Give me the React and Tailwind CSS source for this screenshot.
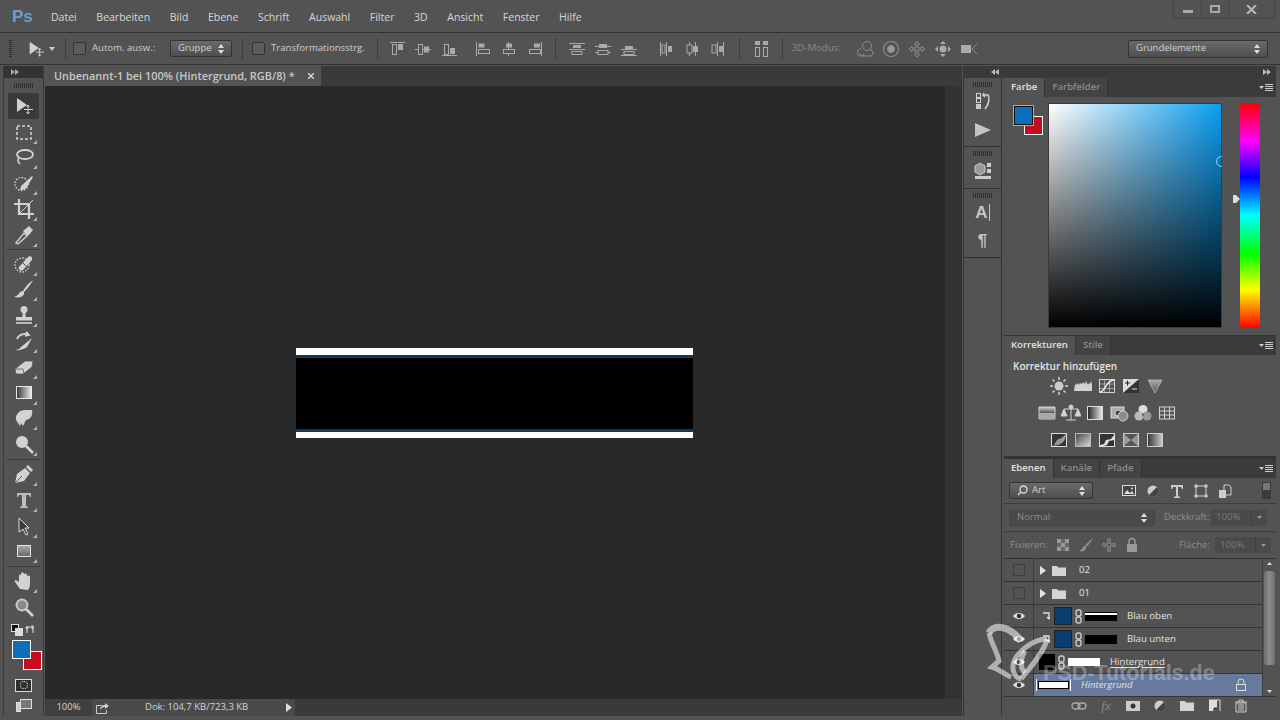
import React from "react";

const FONT = "font-['Open_Sans',sans-serif]";

function Ic({ size = 18, vb = 20, className = "text-[#d2d2d2]", children }) {
  return (
    <svg width={size} height={size} viewBox={`0 0 ${vb} ${vb}`} className={`shrink-0 ${className}`} fill="none" stroke="currentColor" strokeWidth="1">
      {children}
    </svg>
  );
}

// pale gradient used by lots of the adjustment icons
const G = ({ id, from = "#ddd", to = "#555", x2 = 1, y2 = 0 }) => (
  <defs>
    <linearGradient id={id} x1="0" y1="0" x2={x2} y2={y2}>
      <stop offset="0" stopColor={from} />
      <stop offset="1" stopColor={to} />
    </linearGradient>
  </defs>
);

const F = { fill: "currentColor", stroke: "none" };

/* ---------- left tool bar ---------- */
const tools = [
  [<><path d="M3 2l10 7-10 7z" {...F} /><path d="M14 9v9M10 13.500h9" /><path d="M12.500 11l1.500-2 1.500 2M12.500 16l1.500 2 1.500-2" /></>, true, false],
  [<rect x="3" y="4" width="14" height="13" strokeDasharray="3 2" strokeWidth="1.600" />, false, true],
  [<><ellipse cx="11" cy="7.500" rx="8" ry="4.500" strokeWidth="1.800" /><path d="M5 11c-2 2-1 4 1 6" strokeWidth="1.600" /></>, false, true],
  [<><circle cx="7.500" cy="11" r="6.500" strokeDasharray="1.500 1.500" strokeWidth="1.500" /><path d="M7 13L18 3l1 1-6 10c-2 3-5 3-7 3z" {...F} /></>, false, true],
  [<><path d="M5 0v15h15M0 5h15v15" strokeWidth="2.200" /><path d="M6 14L19 1" /></>, false, true],
  [<><path d="M2 18l8-10 3 3-9 8z" strokeWidth="1.300" /><path d="M9 6l6-5 4 4-5 6z" {...F} /></>, false, true],
  "sep",
  [<><circle cx="8" cy="11" r="7" strokeDasharray="1.500 1.500" strokeWidth="1.400" /><path d="M5 13L14 3c3-2 5 1 4 3l-9 10c-3 2-5-1-4-3z" {...F} /><path d="M9 9l3 3" stroke="#555" /></>, false, true],
  [<path d="M19 1c-3 2-8 7-10 11l-3 1c-1 2-3 4-6 5 5 1 9 0 10-3l0-2c3-3 7-8 9-12z" {...F} />, false, true],
  [<><circle cx="10" cy="4.500" r="3.500" {...F} /><path d="M8.500 7h3v5h-3z" {...F} /><path d="M2 12h16v3.500H2z" {...F} /><path d="M2 18h16" strokeWidth="1.600" /></>, false, true],
  [<><path d="M3 8c2-5 8-6 11-4M12 1l3 3-4 1" strokeWidth="1.800" /><path d="M1 19c2 0 5-1 6-3l11-9-5 9c-3 2-8 4-12 3z" {...F} /></>, false, true],
  [<path d="M1 12l10-8h8l-1 6-9 7H2zM2 12h7l1 5" fill="currentColor" stroke="#555" strokeWidth=".8" />, false, true],
  [<><G id="tg" from="#333" to="#eee" /><rect x="2.500" y="3.500" width="15" height="12" fill="url(#tg)" stroke="#e8e8e8" /></>, false, true],
  [<path d="M2 12C1 7 5 2 11 2h7c1 5-1 9-6 10l-3 6-2-3-1 3z" {...F} />, false, true],
  [<><circle cx="8" cy="8" r="6" {...F} /><path d="M12 12l7 7" strokeWidth="2.600" /></>, false, true],
  "sep2",
  [<><path d="M1 19l2-9 8-6 5 5-6 8z" {...F} /><path d="M1 19l7-7" stroke="#555" /><path d="M12 3l2-2 5 5-2 2z" {...F} /></>, false, true],
  [<path d="M3 3h14v4h-1l-1-2h-3v11l2 1v1H6v-1l2-1V5H5L4 7H3z" fill="#bdbdbd" stroke="none" />, false, true],
  [<path d="M5 2l10 10h-4l3 6-2 1-3-6-4 3z" fill="#3a3a3a" stroke="#ddd" />, false, true],
  [<><G id="ts" from="#aaa" to="#666" x2={0} y2={1} /><rect x="3.500" y="4.500" width="13" height="11" fill="url(#ts)" stroke="#e0e0e0" /></>, false, true],
  "sep2",
  [<path d="M6 18L1 11c-1-2 1-3 2-1l2 1V5c0-2 2-2 2 0v3-5c0-2 3-2 3 0v5-4c0-2 3-2 3 0v5-3c0-2 3-2 3 0v7c0 3-1 5-2 6z" {...F} />, false, true],
  [<><circle cx="8" cy="8" r="5.500" fill="#8a8a8a" stroke="#c8c8c8" strokeWidth="2" /><path d="M12 12l7 7" strokeWidth="2.600" /></>, false, false],
];

function Tool({ icon, active, corner }) {
  return (
    <div className={`relative mx-auto flex h-[26px] w-[31px] items-center justify-center rounded-[2px] ${active ? "bg-[#3a3a3a]" : ""}`}>
      <Ic size={20}>{icon}</Ic>
      {corner && <span className="absolute bottom-[1px] right-[2px] h-0 w-0 border-b-[4px] border-l-[4px] border-b-[#b4b4b4] border-l-transparent" />}
    </div>
  );
}

function Grip() {
  return <div className="mx-auto h-[5px] w-[20px] bg-[repeating-linear-gradient(to_right,#2e2e2e_0,#2e2e2e_1px,transparent_1px,transparent_2px)]" />;
}

function Toolbar() {
  return (
    <div className="flex w-[41px] shrink-0 flex-col border-x border-[#3a3a3a] bg-[#535353]">
      <div className="flex h-[12px] shrink-0 items-center bg-[#333] pl-[7px] text-[#aaa]">
        <Chev />
      </div>
      <div className="flex h-[15px] shrink-0 items-center justify-center"><Grip /></div>
      {tools.map((t, i) =>
        t === "sep" ? (
          <div key={i} className="mx-[3px] my-[1px] h-px shrink-0 bg-[#3c3c3c]" />
        ) : t === "sep2" ? (
          <div key={i} className="mx-[3px] mb-[1px] mt-[2px] h-px shrink-0 bg-[#3c3c3c]" />
        ) : (
          <Tool key={i} icon={t[0]} active={t[1]} corner={t[2]} />
        )
      )}
      <div className="flex h-[20px] shrink-0 items-center justify-between px-[7px]">
        <Ic size={12} vb={12}><rect x=".5" y=".5" width="7" height="7" fill="#111" stroke="#ddd" /><rect x="4.500" y="4.500" width="7" height="7" fill="#ddd" stroke="#ddd" /></Ic>
        <Ic size={12} vb={12}><path d="M3 9V3h6M1.500 4.500L3 2.500l1.500 2M7.500 1.500L9.500 3l-2 1.500M9 3v6" strokeWidth="1.200" /></Ic>
      </div>
      <div className="relative mx-[4px] h-[30px] shrink-0">
        <span className="absolute left-[15px] top-[11px] h-[19px] w-[19px] border border-white bg-[#c40e1e]" />
        <span className="absolute left-[4px] top-0 h-[19px] w-[19px] border border-white bg-[#0a70bd]" />
      </div>
      <div className="mt-[9px] flex shrink-0 justify-center">
        <div className="flex h-[13px] w-[17px] items-center justify-center border border-[#ddd] bg-[#2e2e2e]">
          <span className="h-[8px] w-[8px] rounded-full border border-dotted border-white" />
        </div>
      </div>
      <div className="mt-[6px] flex shrink-0 justify-center">
        <Ic size={18} vb={18}><rect x="5.500" y="1.500" width="11" height="9" fill="#777" stroke="#ddd" /><rect x="1.500" y="4.500" width="4" height="9" fill="#ccc" stroke="#ddd" /></Ic>
      </div>
    </div>
  );
}

function Chev({ left }) {
  return (
    <svg width="8" height="6" viewBox="0 0 8 6" className="fill-current">
      {left ? <path d="M4 0v6L0 3zM8 0v6L4 3z" /> : <path d="M0 0v6l4-3zM4 0v6l4-3z" />}
    </svg>
  );
}

/* ---------- options bar ---------- */
const SM = { fill: "#aaa", stroke: "none" };
const alignIcons = [
  <><path d="M1 2.500h15" /><rect x="3.500" y="4.500" width="4" height="10" /><rect x="9" y="4" width="5" height="6" {...SM} /></>,
  <><path d="M0 9.500h16" /><rect x="3.500" y="4.500" width="4" height="10" fill="#535353" /><rect x="9" y="6.500" width="5" height="6" {...SM} /></>,
  <><path d="M1 15.500h15" /><rect x="3.500" y="4.500" width="4" height="10" /><rect x="9" y="8" width="5" height="6" {...SM} /></>,
  <><path d="M2.500 2v14" /><rect x="4.500" y="3.500" width="6" height="4" {...SM} /><rect x="4.500" y="9.500" width="11" height="4" /></>,
  <><path d="M8.500 2v14" /><rect x="6" y="3.500" width="6" height="4" {...SM} /><rect x="3.500" y="9.500" width="11" height="4" fill="#535353" /></>,
  <><path d="M15.500 2v14" /><rect x="8" y="3.500" width="6" height="4" {...SM} /><rect x="3.500" y="9.500" width="11" height="4" /></>,
];
const distIcons = [
  <><path d="M1 3.500h16M1 9.500h16" /><rect x="5" y="5" width="8" height="3" {...SM} /><rect x="4" y="11.500" width="10" height="3" /></>,
  <><path d="M1 6.500h16M1 12.500h16" /><rect x="5" y="4" width="8" height="4" {...SM} /><rect x="4" y="10.500" width="10" height="4" fill="#535353" /></>,
  <><path d="M1 9.500h16M1 15.500h16" /><rect x="5" y="6" width="8" height="3" {...SM} /><rect x="4" y="11.500" width="10" height="3" /></>,
];
const distIcons2 = [
  <><path d="M3.500 2v14M9.500 2v14" /><rect x="5" y="5" width="3" height="8" /><rect x="11" y="6" width="4" height="6" {...SM} /></>,
  <><path d="M6.500 2v14M12.500 2v14" /><rect x="4" y="5" width="5" height="8" fill="#535353" /><rect x="10" y="6" width="5" height="6" {...SM} /></>,
  <><path d="M8.500 2v14M14.500 2v14" /><rect x="3" y="5" width="4" height="8" /><rect x="10" y="6" width="4" height="6" {...SM} /></>,
];
const threeD = [
  <><circle cx="11" cy="6" r="4.500" /><path d="M5 9c-5 0-5 7 0 7h9c4 0 4-6 0-6" /><path d="M3 13l3 3 2-2" /></>,
  <><circle cx="9" cy="9" r="7.500" strokeWidth="1.200" /><circle cx="9" cy="9" r="3.500" fill="#999" /></>,
  <><path d="M9 1l2.500 3H10v4h4V6.500L17 9l-3 2.500V10h-4v4h1.500L9 17l-2.500-3H8v-4H4v1.500L1 9l3-2.500V8h4V4H6.500z" /></>,
  <><path d="M9 1l3 3H6zM9 17l3-3H6zM1 9l3-3v6zM17 9l-3-3v6z" {...SM} /><circle cx="9" cy="9" r="3.500" {...SM} /></>,
  <><rect x="1" y="5" width="10" height="8" {...SM} /><path d="M17 4l-5 5 5 5" /></>,
];

function Spin() {
  return (
    <svg width="6" height="10" viewBox="0 0 6 10" className="fill-[#ddd]"><path d="M3 0l3 4H0zM3 10l3-4H0z" /></svg>
  );
}

function Select({ className, text, textCls = "text-[#d0d0d0]", children, muted }) {
  return (
    <div className={`flex items-center justify-between rounded-[2px] border border-[#333] px-[7px] ${muted ? "bg-[#4a4a4a]" : "bg-[linear-gradient(#6a6a6a,#4e4e4e)]"} ${className}`}>
      <span className={`flex items-center gap-[4px] text-[9.5px] ${textCls}`}>{children}{text}</span>
      <Spin />
    </div>
  );
}

const Check = ({ cls = "" }) => <span className={`block h-[13px] w-[13px] shrink-0 rounded-[2px] border border-[#333] bg-[#5c5c5c] ${cls}`} />;
const VSep = ({ cls = "" }) => <span className={`h-[22px] w-px shrink-0 bg-[#3e3e3e] ${cls}`} />;

function OptionsBar() {
  return (
    <div className="flex h-[33px] shrink-0 items-center border-y border-[#333] bg-[#535353] pl-[9px] pr-[12px] text-[9.6px] text-[#cfcfcf]">
      <span className="h-[18px] w-[3px] shrink-0 bg-[repeating-linear-gradient(#2e2e2e_0,#2e2e2e_1px,transparent_1px,transparent_2px)]" />
      <div className="ml-[15px] flex w-[36px] shrink-0 items-center gap-[4px]">
        <Ic size={18}>{tools[0][0]}</Ic>
        <svg width="6" height="4" viewBox="0 0 6 4" className="fill-[#ccc]"><path d="M0 0h6L3 4z" /></svg>
      </div>
      <VSep cls="ml-[2px]" />
      <Check cls="ml-[7px]" />
      <span className="ml-[6px] w-[73px] shrink-0 whitespace-nowrap">Autom. ausw.:</span>
      <Select className="ml-[5px] h-[17px] w-[62px] shrink-0" text="Gruppe" />
      <VSep cls="ml-[10px]" />
      <Check cls="ml-[9px]" />
      <span className="ml-[6px] whitespace-nowrap">Transformationsstrg.</span>
      <VSep cls="ml-[12px]" />
      <div className="ml-[11px] flex items-center gap-[8px] text-[#aaa]">
        {alignIcons.map((c, i) => <span key={i} className={i === 3 ? "ml-[7px]" : ""}><Ic size={18} vb={18} className="text-[#aaa]">{c}</Ic></span>)}
      </div>
      <VSep cls="ml-[11px]" />
      <div className="ml-[12px] flex items-center gap-[8px]">
        {distIcons.map((c, i) => <Ic key={i} size={18} vb={18} className="text-[#aaa]">{c}</Ic>)}
      </div>
      <div className="ml-[19px] flex items-center gap-[8px]">
        {distIcons2.map((c, i) => <Ic key={i} size={18} vb={18} className="text-[#aaa]">{c}</Ic>)}
      </div>
      <VSep cls="ml-[12px]" />
      <div className="ml-[13px]">
        <Ic size={18} vb={18} className="text-[#aaa]"><rect x="2" y="1" width="5" height="4" {...SM} /><rect x="10" y="1" width="5" height="4" {...SM} /><rect x="2.500" y="7.500" width="4" height="9" /><rect x="10.500" y="7.500" width="4" height="9" /></Ic>
      </div>
      <VSep cls="ml-[11px]" />
      <span className="ml-[9px] whitespace-nowrap text-[#8a8a8a]">3D-Modus:</span>
      <div className="ml-[15px] flex items-center gap-[8px]">
        {threeD.map((c, i) => <Ic key={i} size={18} vb={18} className="text-[#8e8e8e]">{c}</Ic>)}
      </div>
      <Select className="ml-auto h-[18px] w-[140px]" text="Grundelemente" />
    </div>
  );
}

/* ---------- right side ---------- */
function Tab({ label, active }) {
  return (
    <div className={`flex h-full items-center border-r border-[#333] px-[7px] text-[9.6px] font-semibold ${active ? "bg-[#535353] text-[#e2e2e2]" : "bg-[#434343] text-[#8c8c8c]"}`}>
      {label}
    </div>
  );
}

function Tabs({ items }) {
  return (
    <div className="flex h-[19px] shrink-0 items-stretch justify-between bg-[#3b3b3b]">
      <div className="flex">{items.map((t, i) => <Tab key={t} label={t} active={i === 0} />)}</div>
      <div className="flex items-center gap-[1px] pr-[3px]">
        <svg width="5" height="3" viewBox="0 0 5 3" className="fill-[#ccc]"><path d="M0 0h5L2.500 3z" /></svg>
        <span className="h-[7px] w-[8px] bg-[repeating-linear-gradient(#ccc_0,#ccc_1px,transparent_1px,transparent_2px)]" />
      </div>
    </div>
  );
}

const adj1 = [
  <><circle cx="10" cy="10" r="4.500" fill="#ccc" stroke="none" /><path d="M10 1v3M10 16v3M1 10h3M16 10h3M3.500 3.500l2 2M14.500 14.500l2 2M3.500 16.500l2-2M14.500 5.500l2-2" strokeWidth="1.500" /></>,
  <path d="M1 15h18v-7l-1-3-1 3-1-1-1 2-2-4-1 3-2-2-1 2-2-1-1 2-1-2-2 2-1-1z" fill="currentColor" stroke="none" />,
  <><rect x="2.500" y="3.500" width="15" height="13" /><path d="M7.500 3v13M12.500 3v13M2 8h15M2 12.500h15" strokeWidth=".6" /><path d="M3 16c5 0 6-12 14-12" strokeWidth="1.500" stroke="#eee" /></>,
  <><rect x="2" y="3" width="16" height="14" fill="#ddd" stroke="none" /><path d="M2 17L18 3v14z" fill="#333" stroke="none" /><path d="M4 7h5M6.500 4.500v5" stroke="#222" /><path d="M11 13h5" stroke="#ddd" /></>,
];
const adj2 = [
  <><G id="a1" from="#ccc" to="#555" x2={0} y2={1} /><rect x="2" y="4" width="16" height="6" fill="url(#a1)" stroke="none" /><path d="M2 4h16v12H2z" /><rect x="2" y="10" width="16" height="6" fill="#aaa" stroke="none" /></>,
  <><path d="M10 2v15M5 17h10M3 6h14" /><path d="M3 6l-3 7h6zM17 6l-3 7h6z" fill="currentColor" /><circle cx="10" cy="4" r="2" fill="currentColor" /></>,
  <><G id="a2" from="#222" to="#eee" /><rect x="2.500" y="3.500" width="15" height="13" fill="url(#a2)" stroke="#ddd" /></>,
  <><rect x="2" y="4" width="13" height="11" fill="#aaa" stroke="#ddd" /><circle cx="9" cy="10" r="3" fill="#444" /><circle cx="14" cy="13" r="5" fill="#8c8c8c" stroke="#ccc" /></>,
  <><circle cx="10" cy="6.500" r="4.500" fill="#ddd" stroke="none" /><circle cx="6" cy="13" r="4.500" fill="#bbb" stroke="none" /><circle cx="14" cy="13" r="4.500" fill="#999" stroke="none" /><path d="M10 10v3" stroke="#444" /></>,
  <><rect x="2.500" y="4" width="15" height="12" /><path d="M2 8h15M2 12h15M7.500 4v12M12.500 4v12" /></>,
];
const adj3 = [
  <><rect x="2.500" y="3.500" width="15" height="13" fill="#333" stroke="#ddd" /><path d="M3 16c4-1 3-6 7-7s5-4 7-5c0 5-3 10-8 11z" fill="#999" stroke="none" /></>,
  <><G id="a3" from="#444" to="#ddd" x2={1} y2={1} /><rect x="2.500" y="3.500" width="15" height="13" fill="url(#a3)" stroke="#bbb" /></>,
  <><rect x="2.500" y="3.500" width="15" height="13" fill="#333" stroke="#ddd" /><path d="M3 15l4-1 2-4 5-1 3-4v5l-5 1-2 4-7 2z" fill="#ddd" stroke="none" /></>,
  <><rect x="2.500" y="3.500" width="15" height="13" fill="#999" stroke="#ccc" /><path d="M3 4l7 6 7-6zM3 16l7-6 7 6z" fill="#555" stroke="none" /></>,
  <><G id="a4" from="#333" to="#ccc" /><rect x="2.500" y="3.500" width="15" height="13" fill="url(#a4)" stroke="#ccc" /></>,
];

function ColorPanel() {
  return (
    <div className="flex h-[258px] shrink-0 flex-col border-b border-[#333] bg-[#535353]">
      <Tabs items={["Farbe", "Farbfelder"]} />
      <div className="relative flex flex-1 pl-[44px] pt-[6px]">
        <div className="absolute left-[10px] top-[9px] h-[19px] w-[19px]">
          <span className="absolute left-[10px] top-[10px] h-[19px] w-[19px] border border-white bg-[#c40e1e]" />
          <span className="absolute left-0 top-0 h-[19px] w-[19px] border border-[#111] bg-[#0a70bd] outline outline-1 outline-[#aaa]" />
        </div>
        <div className="relative h-[225px] w-[174px] border border-[#3a3a3a] bg-[linear-gradient(to_top,#000,rgba(0,0,0,0)),linear-gradient(to_right,#fff,#0a9ef2)]">
          <span className="absolute right-[-1px] top-[52px] h-[11px] w-[6px] overflow-hidden"><span className="block h-[11px] w-[11px] rounded-full border border-[#8fdcff]" /></span>
        </div>
        <div className="relative ml-[11px] w-[7px]">
          <svg width="7" height="8" viewBox="0 0 7 8" className="absolute top-[92px] fill-[#ddd]"><path d="M0 0h3l4 4-4 4H0z" /></svg>
        </div>
        <div className="h-[225px] w-[20px] bg-[linear-gradient(#f00,#f0f_17%,#00f_33%,#0ff_50%,#0f0_67%,#ff0_83%,#f00)]" />
      </div>
    </div>
  );
}

function IconRow({ items, cls }) {
  return (
    <div className={`flex items-center justify-center ${cls}`}>
      {items.map((c, i) => <Ic key={i} size={20}>{c}</Ic>)}
    </div>
  );
}

function AdjustPanel() {
  return (
    <div className="flex h-[122px] shrink-0 flex-col border-b-2 border-[#333] bg-[#535353]">
      <Tabs items={["Korrekturen", "Stile"]} />
      <div className="pl-[9px] pt-[4px] text-[10px] font-semibold leading-[14px] text-[#e6e6e6]">Korrektur hinzufügen</div>
      <div className="mt-[-1px] flex flex-col pr-[66px]">
        <div className="flex h-[27px] items-center justify-center gap-[4px]">
          {adj1.map((c, i) => <Ic key={i} size={20}>{c}</Ic>)}
          <svg width="20" height="20" viewBox="0 0 20 20"><G id="a5" from="#aaa" to="#555" x2={0} y2={1} /><path d="M3 4h14l-7 13z" fill="url(#a5)" stroke="#aaa" /></svg>
        </div>
        <IconRow items={adj2} cls="h-[27px] gap-[4px]" />
        <IconRow items={adj3} cls="h-[27px] gap-[4px]" />
      </div>
    </div>
  );
}

function Eye() {
  return (
    <Ic size={14} vb={14} className="text-[#ddd]">
      <path d="M1 7c3-4 9-4 12 0-3 4-9 4-12 0z" fill="#ddd" stroke="none" />
      <circle cx="7" cy="7" r="2.200" fill="#333" stroke="none" />
    </Ic>
  );
}

function Folder() {
  return (
    <svg width="14" height="11" viewBox="0 0 14 11"><path d="M0 1h5l1 1.500h8V11H0z" fill="#d4d4d4" /></svg>
  );
}

function Link() {
  return (
    <svg width="7" height="15" viewBox="0 0 7 15" fill="none" stroke="#ccc" strokeWidth="1.400"><rect x="1" y="1" width="5" height="6" rx="2" /><rect x="1" y="8" width="5" height="6" rx="2" /></svg>
  );
}

function Row({ eye, children, sel }) {
  return (
    <div className={`flex h-[23px] shrink-0 items-stretch border-b border-[#333] ${sel ? "bg-[#67799d]" : "bg-[#535353]"}`}>
      <div className={`flex w-[30px] shrink-0 items-center justify-center border-r border-[#3c3c3c] ${sel ? "bg-[#535353]" : ""}`}>
        {eye ? <Eye /> : <span className="h-[12px] w-[12px] border border-[#3e3e3e]" />}
      </div>
      <div className="flex min-w-0 flex-1 items-center text-[9.6px] text-[#e4e4e4]">{children}</div>
    </div>
  );
}

const Arrow = () => <svg width="6" height="9" viewBox="0 0 6 9" className="ml-[6px] fill-[#e4e4e4]"><path d="M0 0l6 4.500L0 9z" /></svg>;
const Clip = () => <svg width="8" height="8" viewBox="0 0 8 8" fill="none" stroke="#ddd" strokeWidth="1.300" className="ml-[8px]"><path d="M1 1h6v6M5 5l2 2M7 7l2-2" /></svg>;

const layerIcons = [
  <><rect x="1.500" y="2.500" width="13" height="10" fill="#444" stroke="#ddd" /><path d="M3 11l3-4 3 3 2-2 2 3z" fill="#ddd" stroke="none" /><circle cx="11" cy="5.500" r="1" fill="#ddd" stroke="none" /></>,
  <><circle cx="8" cy="8" r="5.500" fill="#ccc" stroke="none" /><path d="M4 12L12 4a5.500 5.500 0 0 1-8 8z" fill="#444" stroke="none" /></>,
  <path d="M2 2h12v4h-1l-1-2H9v9l2 1v1H5v-1l2-1V4H4L3 6H2z" fill="#ccc" stroke="none" />,
  <><rect x="3" y="3" width="10" height="10" /><rect x="1.500" y="1.500" width="3" height="3" fill="#ccc" stroke="none" /><rect x="11.500" y="1.500" width="3" height="3" fill="#ccc" stroke="none" /><rect x="1.500" y="11.500" width="3" height="3" fill="#ccc" stroke="none" /><rect x="11.500" y="11.500" width="3" height="3" fill="#ccc" stroke="none" /></>,
  <><path d="M7 2h5l2 2v8H7z" /><rect x="2" y="7" width="7" height="8" fill="#ccc" stroke="none" /></>,
];

const lockIcons = [
  <><rect x="2" y="2" width="12" height="12" fill="#666" stroke="none" /><path d="M2 2h4v4H2zM10 2h4v4h-4zM6 6h4v4H6zM2 10h4v4H2zM10 10h4v4h-4z" fill="#999" stroke="none" /></>,
  <path d="M15 1c-3 2-6 5-8 8l-2 1c-1 2-2 3-4 4 3 1 6 0 7-2v-2c3-2 5-6 7-9z" fill="#8e8e8e" stroke="none" />,
  <path d="M8 1l2 2H9v4h4V6l2 2-2 2V9H9v4h1l-2 2-2-2h1V9H3v1L1 8l2-2v1h4V3H6z" fill="none" stroke="#999" strokeWidth=".9" />,
  <><path d="M5 7V4.500a3 3 0 0 1 6 0V7" stroke="#999" strokeWidth="1.500" /><rect x="3" y="7" width="10" height="8" fill="#999" stroke="none" /></>,
];

const footIcons = [
  <><rect x="1" y="5" width="8" height="6" rx="3" stroke="#aaa" strokeWidth="1.300" /><rect x="7" y="5" width="8" height="6" rx="3" stroke="#aaa" strokeWidth="1.300" /></>,
  null,
  <><rect x="1" y="3" width="14" height="10" fill="#ccc" stroke="none" /><circle cx="8" cy="8" r="2.500" fill="#333" stroke="none" /></>,
  <><circle cx="8" cy="8" r="5.500" fill="#ccc" stroke="none" /><path d="M4 12L12 4a5.500 5.500 0 0 1-8 8z" fill="#444" stroke="none" /></>,
  <path d="M1 3h5l1 1.500h8V13H1z" fill="#d4d4d4" stroke="none" />,
  <><path d="M3 2h11v11" stroke="#ddd" /><path d="M3 2h8v8l-3 3H3z" fill="#ddd" stroke="none" /><path d="M8 13v-3h3" fill="#333" stroke="#333" /></>,
  <><path d="M2 4h12M6 4V2h4v2" stroke="#ccc" /><path d="M3 5h10v9H3z" stroke="#ccc" /><path d="M6 6v7M8 6v7M10 6v7" stroke="#ccc" /></>,
];

function LayersPanel() {
  return (
    <div className="relative flex flex-1 flex-col border-t border-[#333] bg-[#535353]">
      <Tabs items={["Ebenen", "Kanäle", "Pfade"]} />
      <div className="flex h-[26px] shrink-0 items-center border-b border-[#3e3e3e] pl-[5px] pr-[5px]">
        <Select className="h-[17px] w-[84px]" text="Art">
          <svg width="11" height="11" viewBox="0 0 11 11" fill="none" stroke="#ddd" strokeWidth="1.300"><circle cx="6.500" cy="4.500" r="3.500" /><path d="M4 7l-3 3" /></svg>
        </Select>
        <div className="ml-[28px] flex items-center gap-[8px]">
          {layerIcons.map((c, i) => <Ic key={i} size={16} vb={16}>{c}</Ic>)}
        </div>
        <span className="ml-auto h-[17px] w-[9px] border border-[#3a3a3a] bg-[linear-gradient(#777_50%,#3a3a3a_50%)]" />
      </div>
      <div className="flex h-[28px] shrink-0 items-center border-b border-[#3e3e3e] px-[5px]">
        <Select className="h-[16px] w-[146px] border-[#454545]" text="Normal" textCls="text-[#8c8c8c]" muted />
        <span className="ml-[9px] w-[47px] text-[9.6px] text-[#8c8c8c]">Deckkraft:</span>
        <Pct />
      </div>
      <div className="flex h-[27px] shrink-0 items-center border-b border-[#333] pl-[6px] pr-[5px]">
        <span className="w-[44px] text-[9.6px] text-[#8c8c8c]">Fixieren:</span>
        <div className="ml-[1px] flex items-center gap-[7px]">
          {lockIcons.map((c, i) => <Ic key={i} size={16} vb={16}>{c}</Ic>)}
        </div>
        <span className="ml-auto mr-[5px] text-[9.6px] text-[#8c8c8c]">Fläche:</span>
        <Pct />
      </div>
      <div className="flex h-[138px] shrink-0 border-b border-[#333]">
        <div className="flex flex-1 flex-col">
          <Row><Arrow /><span className="ml-[6px]"><Folder /></span><span className="ml-[13px]">02</span></Row>
          <Row><Arrow /><span className="ml-[6px]"><Folder /></span><span className="ml-[13px]">01</span></Row>
          <Row eye>
            <Clip />
            <span className="ml-[5px] h-[16px] w-[16px] bg-[#0a3d6e] outline outline-1 outline-[#222]" />
            <span className="ml-[4px]"><Link /></span>
            <span className="ml-[3px] flex h-[9px] w-[32px] items-start bg-black pt-[1px]"><span className="h-[2px] w-full bg-white" /></span>
            <span className="ml-[10px]">Blau oben</span>
          </Row>
          <Row eye>
            <Clip />
            <span className="ml-[5px] h-[16px] w-[16px] bg-[#0a3d6e] outline outline-1 outline-[#222]" />
            <span className="ml-[4px]"><Link /></span>
            <span className="ml-[3px] h-[9px] w-[32px] bg-black" />
            <span className="ml-[10px]">Blau unten</span>
          </Row>
          <Row eye>
            <span className="ml-[5px] h-[16px] w-[16px] bg-black" />
            <span className="ml-[3px]"><Link /></span>
            <span className="ml-[3px] h-[8px] w-[32px] bg-white" />
            <span className="ml-[10px] underline underline-offset-2">Hintergrund</span>
          </Row>
          <Row eye sel>
            <span className="ml-[2px] flex h-[12px] w-[35px] items-center justify-center border-x border-white bg-[#67799d]"><span className="h-[8px] w-[31px] border border-black bg-white" /></span>
            <span className="ml-[10px] italic">Hintergrund</span>
            <span className="ml-auto mr-[14px]"><Ic size={14} vb={14} className="text-[#ddd]"><path d="M4 6V4a3 3 0 0 1 6 0v2" /><rect x="2.500" y="6.500" width="9" height="6" /></Ic></span>
          </Row>
        </div>
        <div className="flex w-[14px] flex-col items-center border-l border-[#3e3e3e] bg-[#535353] py-[3px]">
          <svg width="5" height="3" viewBox="0 0 5 3" className="fill-[#ddd]"><path d="M2.500 0L5 3H0z" /></svg>
          <span className="mt-[6px] h-[94px] w-[11px] rounded-[3px] bg-[linear-gradient(to_right,#6e6e6e,#8c8c8c,#6e6e6e)]" />
          <svg width="5" height="3" viewBox="0 0 5 3" className="mt-auto fill-[#ddd]"><path d="M0 0h5L2.500 3z" /></svg>
        </div>
      </div>
      <div className="flex h-[18px] shrink-0 items-center justify-end gap-[11px] pr-[27px]">
        {footIcons.map((c, i) =>
          c === null ? (
            <span key={i} className="w-[16px] text-center font-['Liberation_Serif',serif] text-[13px] italic text-[#888]">fx</span>
          ) : (
            <Ic key={i} size={16} vb={16}>{c}</Ic>
          )
        )}
      </div>
      {/* PSD-Tutorials watermark over the layer list */}
      <svg width="70" height="62" viewBox="0 0 70 62" fill="none" stroke="#fff" strokeOpacity=".55" strokeWidth="5" className="pointer-events-none absolute left-[-19px] top-[162px]">
        <path d="M4 12C8 3 24 4 36 20" strokeWidth="7" />
        <path d="M4 12c2 10 8 18 10 28l-7 6c7 2 13 8 19 10" />
        <path d="M62 18C48 18 30 32 28 44c-1 8 4 14 8 14" />
        <path d="M62 18C60 30 44 48 36 58" />
        <path d="M40 30c-6 10-4 18 0 22" />
      </svg>
      <span className="pointer-events-none absolute left-[39px] top-[202px] whitespace-nowrap font-['Liberation_Sans',sans-serif] text-[21.5px] font-bold leading-[24px] text-white/30">PSD-Tutorials.de</span>
    </div>
  );
}

function Pct() {
  return (
    <div className="flex h-[16px] w-[56px] items-stretch rounded-[2px] bg-[#4a4a4a] text-[9.6px] text-[#7a7a7a]">
      <span className="flex flex-1 items-center pl-[5px]">100%</span>
      <span className="flex w-[16px] items-center justify-center border-l border-[#3e3e3e]">
        <svg width="5" height="3" viewBox="0 0 5 3" className="fill-[#999]"><path d="M0 0h5L2.500 3z" /></svg>
      </span>
    </div>
  );
}

function Dock() {
  return (
    <div className="flex w-[39px] shrink-0 flex-col border-x border-[#333] bg-[#535353]">
      <div className="flex h-[12px] items-center justify-center"><Grip /></div>
      <div className="flex h-[24px] items-center justify-center"><Ic size={20}><rect x="3.500" y="1.500" width="4" height="4" /><rect x="3.500" y="6.500" width="4" height="4" /><rect x="3" y="12" width="5" height="5" fill="#ccc" stroke="none" /><path d="M10 3h5c2 3 1 9-3 14M11 1l-1 2 2 2" strokeWidth="1.500" /></Ic></div>
      <div className="flex h-[32px] items-center justify-center"><svg width="16" height="14" viewBox="0 0 16 14" className="fill-[#c4c4c4]"><path d="M0 0l16 7-16 7z" /></svg></div>
      <div className="h-px bg-[#333]" />
      <div className="flex h-[12px] items-center justify-center"><Grip /></div>
      <div className="flex h-[24px] items-center justify-center"><Ic size={20}><path d="M2 5l5-3 5 3v6l-5 3-5-3z" fill="#999" stroke="#ccc" /><rect x="14" y="2" width="4" height="4" fill="#ccc" stroke="none" /><rect x="14" y="8" width="4" height="4" fill="#ccc" stroke="none" /><rect x="2" y="15" width="16" height="3" fill="#ccc" stroke="none" /></Ic></div>
      <div className="mt-[5px] h-px bg-[#333]" />
      <div className="flex h-[12px] items-center justify-center"><Grip /></div>
      <div className="flex h-[22px] items-center justify-center gap-[1px] font-['Liberation_Sans',sans-serif] text-[17px] font-bold leading-none text-[#c4c4c4]">A<span className="h-[17px] w-px bg-[#c4c4c4]" /></div>
      <div className="mt-[3px] flex h-[28px] items-center justify-center font-['Liberation_Sans',sans-serif] text-[17px] font-bold leading-none text-[#c4c4c4]">¶</div>
      <div className="mt-[3px] h-px bg-[#333]" />
    </div>
  );
}

export default function App() {
  return (
    <div className={`flex h-[720px] w-[1280px] flex-col overflow-hidden bg-[#535353] ${FONT}`}>
      {/* title + menu */}
      <div className="relative flex h-[32px] shrink-0 items-center pl-[12px] text-[10.5px] text-[#d8d8d8]">
        <span className="w-[39px] font-['Liberation_Sans',sans-serif] text-[17px] font-bold leading-none text-[#6f9cc4]">Ps</span>
        <div className="flex gap-[19.6px] pt-[3px]">
          {["Datei", "Bearbeiten", "Bild", "Ebene", "Schrift", "Auswahl", "Filter", "3D", "Ansicht", "Fenster", "Hilfe"].map((m) => (
            <span key={m}>{m}</span>
          ))}
        </div>
        <div className="absolute right-[5px] top-0 flex h-[19px] w-[102px] items-stretch rounded-b-[2px] border border-t-0 border-[#464646] text-[#a8a8a8]">
          <span className="flex w-[28px] items-center justify-center border-r border-[#464646]"><span className="mt-[5px] h-[3px] w-[10px] bg-[#aaa]" /></span>
          <span className="flex w-[27px] items-center justify-center border-r border-[#464646]"><span className="h-[8px] w-[10px] border-2 border-[#aaa]" /></span>
          <span className="flex flex-1 items-center justify-center">
            <svg width="11" height="9" viewBox="0 0 11 9" stroke="#b4b4b4" strokeWidth="2.200"><path d="M1 0l9 9M10 0L1 9" /></svg>
          </span>
        </div>
      </div>
      <OptionsBar />
      <div className="flex min-h-0 flex-1 pb-[4px] pl-[3px] pr-[4px] pt-[1px]">
        <Toolbar />
        {/* document */}
        <div className="ml-[1px] flex min-w-0 flex-1 flex-col bg-[#3a3a3a]">
          <div className="flex h-[20px] shrink-0 items-stretch">
            <div className="flex w-[276px] items-center justify-between bg-[#535353] pl-[9px] pr-[7px] text-[10.9px] font-semibold text-[#c8c8c8]">
              <span className="whitespace-nowrap">Unbenannt-1 bei 100% (Hintergrund, RGB/8) *</span>
              <svg width="6" height="6" viewBox="0 0 6 6" stroke="#ddd" strokeWidth="1.300"><path d="M0 0l6 6M6 0L0 6" /></svg>
            </div>
          </div>
          <div className="flex min-h-0 flex-1">
            <div className="flex flex-1 items-center justify-center bg-[#292929]">
              <div className="mr-[2px] flex h-[90px] w-[397px] flex-col bg-black">
                <div className="h-[7px] bg-white" />
                <div className="h-[3px] bg-[#123a58]" />
                <div className="flex-1" />
                <div className="h-[3px] bg-[#123a58]" />
                <div className="h-[6px] bg-white" />
              </div>
            </div>
            <div className="w-[17px] bg-[#323232]" />
          </div>
          <div className="flex h-[17px] shrink-0 items-stretch bg-[#3a3a3a] text-[9.5px] text-[#d4d4d4]">
            <span className="flex w-[47px] items-center justify-center bg-[#3f3f3f]">100%</span>
            <div className="flex w-[203px] items-center bg-[#4a4a4a] pl-[3px]">
              <Ic size={14} vb={14} className="text-[#ccc]"><path d="M1.500 4.500h5M1.500 4.500v8h10V9" /><path d="M5 9c0-3 2-5 5-5V2l4 3-4 3V6c-2 0-4 1-5 3z" fill="#ccc" stroke="none" /></Ic>
              <span className="ml-[36px] whitespace-nowrap">Dok: 104,7 KB/723,3 KB</span>
              <svg width="6" height="9" viewBox="0 0 6 9" className="ml-auto mr-[3px] fill-[#ddd]"><path d="M0 0l6 4.500L0 9z" /></svg>
            </div>
          </div>
        </div>
        {/* right side */}
        <div className="ml-[1px] flex w-[313px] shrink-0 flex-col">
          <div className="flex h-[12px] shrink-0 items-center justify-between bg-[#3a3a3a] pl-[28px] pr-[5px] text-[#bbb]">
            <Chev left />
            <Chev />
          </div>
          <div className="flex min-h-0 flex-1">
            <Dock />
            <div className="ml-[2px] flex min-w-0 flex-1 flex-col">
              <ColorPanel />
              <AdjustPanel />
              <LayersPanel />
            </div>
          </div>
        </div>
      </div>
    </div>
  );
}
